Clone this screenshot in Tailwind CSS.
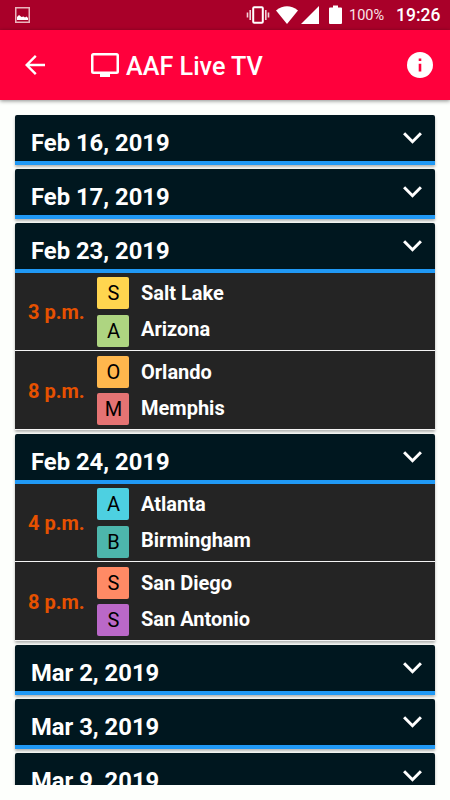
<!DOCTYPE html>
<html lang="en">
<head>
    <meta charset="UTF-8">
    <meta name="viewport" content="width=device-width, initial-scale=1.0">
    <title>AAF Live TV</title>
    <script src="https://cdn.jsdelivr.net/npm/@tailwindcss/browser@4"></script>
    <style>
        body {
            font-family: 'Roboto', sans-serif;
        }
    </style>
</head>
<body class="bg-[#fdfffc] h-[800px] overflow-hidden flex flex-col text-white">
    <!-- Status bar -->
    <div class="h-[30px] shrink-0 bg-[#a90029] flex items-center pl-[15px] pr-[10px]">
        <svg class="w-[15px] h-4" viewBox="0 0 15 16" fill="none">
            <rect x="0.75" y="0.75" width="13.5" height="14.5" stroke="#eab5bd" stroke-width="1.5"/>
            <path d="M2 13V10L4 8L6.5 10L8.500 9.500L10 10.500L11.500 9.500L13 11V13Z" fill="#fff"/>
        </svg>
        <svg class="ml-auto w-6 h-5" viewBox="0 0 24 20" fill="none" stroke="#f3d0d8" stroke-width="1.6">
            <rect x="7.200" y="2.200" width="9.600" height="15.600" rx="1" stroke="#fff" stroke-width="2"/>
            <path d="M4.200 5V15M1.500 7.500V12.500M19.800 5V15M22.500 7.500V12.500"/>
        </svg>
        <svg class="ml-1.5 w-[22px] h-5" viewBox="0 0 22 20" fill="#fff"><path d="M0 5.500Q11 -2.800 22 5.500L11 19Z"/></svg>
        <svg class="ml-[3px] w-[18px] h-5" viewBox="0 0 18 20" fill="#fff"><path d="M18 1V19H0Z"/></svg>
        <svg class="ml-2.5 w-[13px] h-5" viewBox="0 0 13 20" fill="#fff"><path d="M4 0.500H9V2.500H12Q13 2.500 13 3.500V18Q13 19 12 19H1Q0 19 0 18V3.500Q0 2.500 1 2.500H4Z"/></svg>
        <span class="ml-[7px] mt-px w-[35px] text-[14.500px] text-[#f9e4e8] whitespace-nowrap">100%</span>
        <span class="ml-3 mt-px w-[44px] text-[17.500px] font-medium whitespace-nowrap">19:26</span>
    </div>

    <!-- App bar -->
    <div class="relative h-[70px] shrink-0 bg-[#ff003c] shadow-[0_1px_4px_rgba(0,0,0,0.45)] flex items-center pl-[25px] pr-[17px]">
        <svg class="w-5 h-5" viewBox="0 0 20 20" fill="none" stroke="#fff" stroke-width="2.4"><path d="M20 10H2M10.800 0.900L1.700 10L10.800 19.100"/></svg>
        <svg class="ml-[46px] w-7 h-6" viewBox="0 0 28 24" fill="#fff">
            <path fill-rule="evenodd" d="M2.500 0H25.500Q28 0 28 2.500V18.500Q28 21 25.500 21H19V24H9V21H2.500Q0 21 0 18.500V2.500Q0 0 2.500 0ZM2.500 2.500V18.500H25.500V2.500Z"/>
        </svg>
        <h1 class="ml-[7px] mt-1 text-[25.200px] font-medium whitespace-nowrap">AAF Live TV</h1>
        <svg class="ml-auto w-[26px] h-[26px]" viewBox="0 0 26 26">
            <circle cx="13" cy="13" r="13" fill="#fff"/>
            <path d="M11.700 6.500H14.300V9H11.700ZM11.700 11.700H14.300V19.500H11.700Z" fill="#ff003c"/>
        </svg>
    </div>

    <!-- Schedule -->
    <div class="mt-2.5 h-[675px] shrink-0 overflow-hidden px-[15px] pt-[5px]">
        <div class="flex flex-col gap-1">
            <section class="rounded-t-xs shadow-[0_2px_3px_rgba(0,0,0,0.3)]">
                <div class="h-[50px] bg-[#00171f] border-b-4 border-[#2099f5] rounded-t-xs flex justify-between pl-4 pr-[13px]">
                    <h2 class="mt-2.5 text-[23.800px] leading-9 font-bold">Feb 16, 2019</h2>
                    <svg class="mt-[17px] w-[19px] h-3" viewBox="0 0 19 12" fill="none" stroke="#fff" stroke-width="3"><path d="M1.100 1.300L9.500 9.700L17.900 1.300"/></svg>
                </div>
            </section>

            <section class="rounded-t-xs shadow-[0_2px_3px_rgba(0,0,0,0.3)]">
                <div class="h-[50px] bg-[#00171f] border-b-4 border-[#2099f5] rounded-t-xs flex justify-between pl-4 pr-[13px]">
                    <h2 class="mt-2.5 text-[23.800px] leading-9 font-bold">Feb 17, 2019</h2>
                    <svg class="mt-[17px] w-[19px] h-3" viewBox="0 0 19 12" fill="none" stroke="#fff" stroke-width="3"><path d="M1.100 1.300L9.500 9.700L17.900 1.300"/></svg>
                </div>
            </section>

            <section class="rounded-t-xs shadow-[0_2px_3px_rgba(0,0,0,0.3)]">
                <div class="h-[50px] bg-[#00171f] border-b-4 border-[#2099f5] rounded-t-xs flex justify-between pl-4 pr-[13px]">
                    <h2 class="mt-2.5 text-[23.800px] leading-9 font-bold">Feb 23, 2019</h2>
                    <svg class="mt-[17px] w-[19px] h-3" viewBox="0 0 19 12" fill="none" stroke="#fff" stroke-width="3"><path d="M1.100 1.300L9.500 9.700L17.900 1.300"/></svg>
                </div>
                <div class="h-[78px] bg-[#242424] border-b border-[#f4f4f4] flex pt-1 text-[20px] font-bold">
                    <div class="w-[82px] pl-[13px] leading-[70px] text-[#e65100]">3 p.m.</div>
                    <div class="flex flex-col gap-1.5 text-black font-normal text-center leading-[33px]">
                        <span class="w-8 h-8 pl-px rounded-xs bg-[#ffd54f]">S</span>
                        <span class="w-8 h-8 pl-px rounded-xs bg-[#aed581]">A</span>
                    </div>
                    <div class="pl-3 leading-9">
                        <p class="-mt-0.5">Salt Lake</p>
                        <p>Arizona</p>
                    </div>
                </div>
                <div class="h-[79px] bg-[#242424] border-b border-[#f4f4f4] flex pt-[5px] text-[20px] font-bold">
                    <div class="w-[82px] pl-[13px] leading-[70px] text-[#e65100]">8 p.m.</div>
                    <div class="flex flex-col gap-[5px] text-black font-normal text-center leading-[33px]">
                        <span class="w-8 h-8 pl-px rounded-xs bg-[#ffb74d]">O</span>
                        <span class="w-8 h-8 pl-px rounded-xs bg-[#e57373]">M</span>
                    </div>
                    <div class="pl-3 leading-9">
                        <p class="-mt-0.5">Orlando</p>
                        <p>Memphis</p>
                    </div>
                </div>
            </section>

            <section class="rounded-t-xs shadow-[0_2px_3px_rgba(0,0,0,0.3)]">
                <div class="h-[50px] bg-[#00171f] border-b-4 border-[#2099f5] rounded-t-xs flex justify-between pl-4 pr-[13px]">
                    <h2 class="mt-2.5 text-[23.800px] leading-9 font-bold">Feb 24, 2019</h2>
                    <svg class="mt-[17px] w-[19px] h-3" viewBox="0 0 19 12" fill="none" stroke="#fff" stroke-width="3"><path d="M1.100 1.300L9.500 9.700L17.900 1.300"/></svg>
                </div>
                <div class="h-[78px] bg-[#242424] border-b border-[#f4f4f4] flex pt-1 text-[20px] font-bold">
                    <div class="w-[82px] pl-[13px] leading-[70px] text-[#e65100]">4 p.m.</div>
                    <div class="flex flex-col gap-1.5 text-black font-normal text-center leading-[33px]">
                        <span class="w-8 h-8 pl-px rounded-xs bg-[#4dd0e1]">A</span>
                        <span class="w-8 h-8 pl-px rounded-xs bg-[#4db6ac]">B</span>
                    </div>
                    <div class="pl-3 leading-9">
                        <p class="-mt-0.5">Atlanta</p>
                        <p>Birmingham</p>
                    </div>
                </div>
                <div class="h-[79px] bg-[#242424] border-b border-[#f4f4f4] flex pt-[5px] text-[20px] font-bold">
                    <div class="w-[82px] pl-[13px] leading-[70px] text-[#e65100]">8 p.m.</div>
                    <div class="flex flex-col gap-[5px] text-black font-normal text-center leading-[33px]">
                        <span class="w-8 h-8 pl-px rounded-xs bg-[#ff8a65]">S</span>
                        <span class="w-8 h-8 pl-px rounded-xs bg-[#ba68c8]">S</span>
                    </div>
                    <div class="pl-3 leading-9">
                        <p class="-mt-0.5">San Diego</p>
                        <p>San Antonio</p>
                    </div>
                </div>
            </section>

            <section class="rounded-t-xs shadow-[0_2px_3px_rgba(0,0,0,0.3)]">
                <div class="h-[50px] bg-[#00171f] border-b-4 border-[#2099f5] rounded-t-xs flex justify-between pl-4 pr-[13px]">
                    <h2 class="mt-2.5 text-[23.800px] leading-9 font-bold">Mar 2, 2019</h2>
                    <svg class="mt-[17px] w-[19px] h-3" viewBox="0 0 19 12" fill="none" stroke="#fff" stroke-width="3"><path d="M1.100 1.300L9.500 9.700L17.900 1.300"/></svg>
                </div>
            </section>

            <section class="rounded-t-xs shadow-[0_2px_3px_rgba(0,0,0,0.3)]">
                <div class="h-[50px] bg-[#00171f] border-b-4 border-[#2099f5] rounded-t-xs flex justify-between pl-4 pr-[13px]">
                    <h2 class="mt-2.5 text-[23.800px] leading-9 font-bold">Mar 3, 2019</h2>
                    <svg class="mt-[17px] w-[19px] h-3" viewBox="0 0 19 12" fill="none" stroke="#fff" stroke-width="3"><path d="M1.100 1.300L9.500 9.700L17.900 1.300"/></svg>
                </div>
            </section>

            <section class="rounded-t-xs shadow-[0_2px_3px_rgba(0,0,0,0.3)]">
                <div class="h-[50px] bg-[#00171f] border-b-4 border-[#2099f5] rounded-t-xs flex justify-between pl-4 pr-[13px]">
                    <h2 class="mt-2.5 text-[23.800px] leading-9 font-bold">Mar 9, 2019</h2>
                    <svg class="mt-[17px] w-[19px] h-3" viewBox="0 0 19 12" fill="none" stroke="#fff" stroke-width="3"><path d="M1.100 1.300L9.500 9.700L17.900 1.300"/></svg>
                </div>
            </section>
        </div>
    </div>
</body>
</html>
